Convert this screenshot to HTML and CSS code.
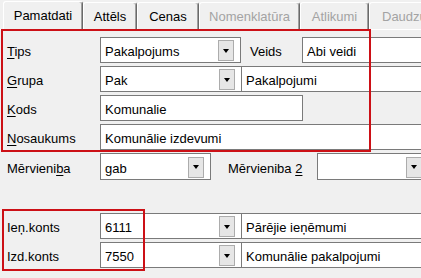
FILE: index.html
```html
<!DOCTYPE html>
<html lang="lv">
<head>
  <meta charset="UTF-8">
  <title>Pakalpojums</title>
  <link rel="stylesheet" href="styles.css">
</head>
<body>
  <div class="tabs">
    <div class="tab tab-main active">Pamatdati</div>
    <div class="tab tab-image">Attēls</div>
    <div class="tab tab-prices">Cenas</div>
    <div class="tab tab-nomen disabled">Nomenklatūra</div>
    <div class="tab tab-stock disabled">Atlikumi</div>
    <div class="tab tab-qty disabled">Daudzums</div>
  </div>

  <div class="panel">
    <div class="row">
      <span class="lbl"><u>T</u>ips</span>
      <div class="field combo w-code"><span class="val">Pakalpojums</span><span class="drop"><i></i></span></div>
      <span class="lbl2 lbl-kind">Veids</span>
      <div class="field grow">Abi veidi</div>
    </div>
    <div class="row">
      <span class="lbl"><u>G</u>rupa</span>
      <div class="field combo w-code2"><span class="val">Pak</span><span class="drop"><i></i></span></div>
      <div class="field grow joined">Pakalpojumi</div>
    </div>
    <div class="row">
      <span class="lbl"><u>K</u>ods</span>
      <div class="field w-kods">Komunalie</div>
    </div>
    <div class="row">
      <span class="lbl"><u>N</u>osaukums</span>
      <div class="field grow">Komunālie izdevumi</div>
    </div>
    <div class="row row-unit">
      <span class="lbl">Mērvieni<u>b</u>a</span>
      <div class="field combo w-unit"><span class="val">gab</span><span class="drop"><i></i></span></div>
      <span class="lbl2 lbl-unit2">Mērvieniba <u>2</u></span>
      <div class="field combo w-unit2"><span class="val"></span><span class="drop"><i></i></span></div>
    </div>
    <div class="row row-accounts">
      <span class="lbl">Ieņ.konts</span>
      <div class="field combo w-code2"><span class="val">6111</span><span class="drop"><i></i></span></div>
      <div class="field grow joined">Pārējie ieņēmumi</div>
    </div>
    <div class="row">
      <span class="lbl">Izd.konts</span>
      <div class="field combo w-code2"><span class="val">7550</span><span class="drop"><i></i></span></div>
      <div class="field grow joined">Komunālie pakalpojumi</div>
    </div>
  </div>

  <div class="mark mark-main"></div>
  <div class="mark mark-accounts"></div>
</body>
</html>
```

FILE: styles.css
```css
body {
  margin: 0;
  width: 421px;
  height: 278px;
  overflow: hidden;
  position: relative;
  background-color: #f0f0f0;
  font-family: "Liberation Sans", Arial, sans-serif;
  font-size: 13px;
  line-height: 15px;
  color: #000;
}

u {
  text-decoration: underline;
  text-underline-offset: 2px;
}

/* tab strip */
.tabs {
  display: flex;
  align-items: flex-end;
  height: 29px;
  padding-left: 3px;
}

.tab {
  height: 27px;
  box-sizing: border-box;
  display: flex;
  align-items: center;
  justify-content: center;
  flex-shrink: 0;
  border-top: 1px solid #fff;
  border-left: 1px solid #fff;
  border-right: 1px solid #6a6a6a;
  border-radius: 3px 3px 0 0;
  box-shadow: inset -1px 0 0 #a0a0a0;
  white-space: nowrap;
}

.tab.active {
  height: 28px;
}

.tab.disabled {
  color: #a3a3a3;
}

.tab-main { width: 80px; }
.tab-image { width: 54px; }
.tab-prices { width: 62px; }
.tab-nomen { width: 101px; }
.tab-stock { width: 69px; }
.tab-qty { width: 80px; justify-content: flex-start; padding-left: 12px; }

/* form */
.panel {
  width: 470px;
  border-top: 1px solid #fff;
  padding: 7px 0 0 7px;
}

.row {
  display: flex;
  align-items: center;
  height: 26px;
  margin-bottom: 3px;
}

.row-unit {
  height: 27px;
  margin-top: 1px;
}

.row-accounts {
  margin-top: 33px;
}

.lbl {
  width: 93px;
  flex-shrink: 0;
  padding-top: 3px;
  white-space: nowrap;
}

.lbl2 {
  flex-shrink: 0;
  padding-top: 3px;
  white-space: nowrap;
}

.lbl-kind {
  width: 52px;
  margin-left: 9px;
}

.lbl-unit2 {
  width: 89px;
  margin-left: 17px;
}

.field {
  height: 100%;
  box-sizing: border-box;
  display: flex;
  align-items: center;
  flex-shrink: 0;
  padding: 3px 0 0 4px;
  background-color: #fff;
  border: 1px solid #7a7a7a;
  white-space: nowrap;
}

.grow {
  flex: 1;
}

.joined {
  margin-left: -1px;
}

.w-code { width: 141px; }
.w-code2 { width: 142px; }
.w-kods { width: 203px; }
.w-unit { width: 111px; }
.w-unit2 { width: 112px; }

.combo {
  padding-right: 6px;
}

.combo .val {
  flex: 1;
}

.drop {
  width: 16px;
  height: 21px;
  box-sizing: border-box;
  margin-top: -2px;
  display: flex;
  align-items: center;
  justify-content: center;
  background-color: #e6e6e6;
  border: 1px solid #acacac;
}

.drop i {
  width: 0;
  height: 0;
  border-left: 3.5px solid transparent;
  border-right: 3.5px solid transparent;
  border-top: 4px solid #000;
}

/* red highlight frames drawn over the form */
.mark {
  position: absolute;
  box-sizing: border-box;
  border: 2px solid #cc1016;
}

.mark-main {
  left: 1px;
  top: 29px;
  width: 370px;
  height: 123px;
}

.mark-accounts {
  left: 2px;
  top: 209px;
  width: 143px;
  height: 62px;
}
```
